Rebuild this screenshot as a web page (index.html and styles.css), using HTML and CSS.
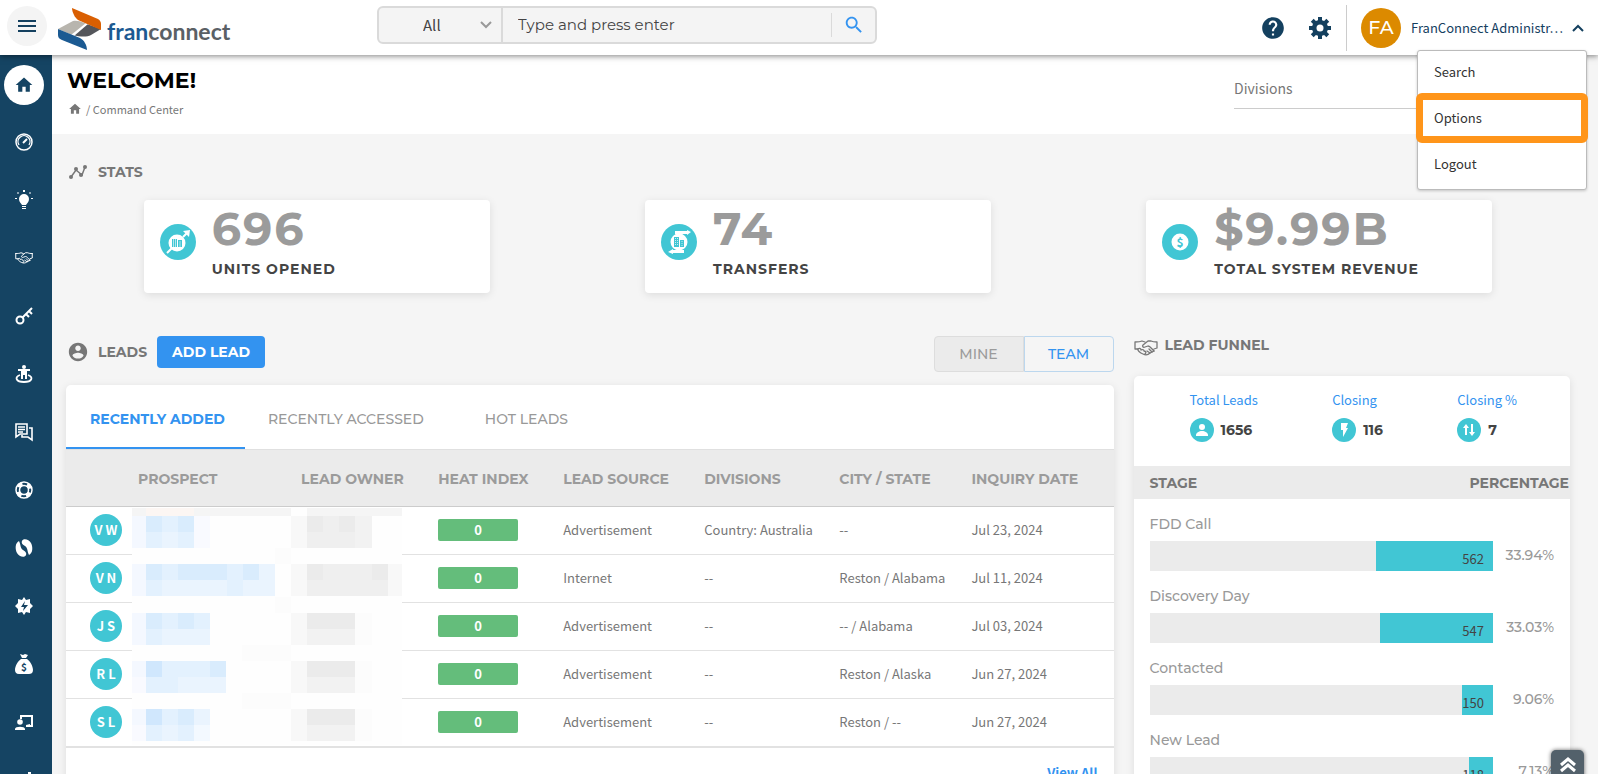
FILE: index.html
```
<!DOCTYPE html>
<html lang="en">
<head>
    <meta charset="UTF-8">
    <meta name="viewport" content="width=device-width, initial-scale=1.0">
    <title>FranConnect - Command Center</title>
    <link rel="stylesheet" href="styles.css">
</head>
<body>
    <svg class="sprite" aria-hidden="true">
        <symbol id="home" viewBox="0 0 24 24"><path d="M10 20v-6h4v6h5v-8h3L12 3 2 12h3v8z"/></symbol>
        <symbol id="shake" viewBox="0 0 24 16">
            <g fill="none" stroke="currentColor" stroke-width="1.300" stroke-linejoin="round" stroke-linecap="round">
                <path d="M1 2c3 0 5 0 7-1l3 1M1 2v7h3"/>
                <path d="M23 2c-3 0-4 0-6-1h-3L9 5c-1 1 0 3 2 2l3-1c2 0 3 2 6 5M23 2v6l-3 1"/>
                <path d="M4 9c1-1 3-1 3 1 2-1 3 0 3 1 1 0 3 1 1 3M4 9c-1 1 2 4 5 5 2 1 5 1 7-1l4-2"/>
                <path d="M15 9l3 3M13 11l3 2"/>
            </g>
        </symbol>
    </svg>

    <header class="topbar">
        <div class="brand">
            <button class="menu-btn" type="button" aria-label="Menu">
                <svg width="18" height="12" viewBox="0 0 18 12"><path d="M0 0h18v2H0zM0 5h18v2H0zM0 10h18v2H0z"/></svg>
            </button>
            <a class="logo" href="#">
                <svg width="44" height="42" viewBox="0 0 44 42">
                    <path fill="#b8b5ae" d="M0 21L15 13c3-1 8 0 14 3L14 27z"/>
                    <path fill="#54565b" d="M43 21L33 27c-4 2-10 2-18 0l14-11z"/>
                    <path fill="#fff" d="M13 27L28 15l2 1-14 12z"/>
                    <path fill="#d95f02" d="M14 0l26 11c2 1 3 3 3 5v6L20 12c-3-2-6-8-6-12z"/>
                    <path fill="#1b5a92" d="M0 21l22 9c4 2 7 7 7 12L4 32c-3-1-4-3-4-5z"/>
                </svg>
                <span class="logo-text"><span class="logo-blue">fran</span>connect</span>
            </a>
        </div>

        <form class="search">
            <div class="search-scope">
                <select aria-label="Search scope">
                    <option>All</option>
                </select>
                <svg width="12" height="8" viewBox="0 0 12 8"><path d="M1 1l5 5 5-5" fill="none" stroke="#999" stroke-width="2"/></svg>
            </div>
            <input type="text" placeholder="Type and press enter" aria-label="Search">
            <button type="submit" aria-label="Search">
                <svg width="22" height="22" viewBox="0 0 24 24"><path d="M15.500 14h-.79l-.28-.27C15.410 12.590 16 11.110 16 9.500 16 5.910 13.090 3 9.500 3S3 5.910 3 9.500 5.910 16 9.500 16c1.610 0 3.090-.59 4.230-1.570l.27.28v.79l5 4.990L20.490 19l-4.990-5zm-6 0C7.010 14 5 11.990 5 9.500S7.010 5 9.500 5 14 7.010 14 9.500 11.990 14 9.500 14z"/></svg>
            </button>
        </form>

        <div class="actions">
            <button class="icon-btn" type="button" aria-label="Help">
                <svg width="26" height="26" viewBox="0 0 24 24"><path d="M12 2C6.480 2 2 6.480 2 12s4.480 10 10 10 10-4.480 10-10S17.520 2 12 2zm1 17h-2v-2h2v2zm2.070-7.750l-.9.92C13.450 12.900 13 13.500 13 15h-2v-.5c0-1.100.45-2.100 1.170-2.830l1.240-1.260c.37-.36.59-.86.59-1.410 0-1.100-.9-2-2-2s-2 .9-2 2H8c0-2.210 1.790-4 4-4s4 1.790 4 4c0 .88-.36 1.680-.93 2.250z"/></svg>
            </button>
            <button class="icon-btn" type="button" aria-label="Settings">
                <svg width="22" height="22" viewBox="0 0 22 22">
                    <g id="teeth"><path d="M9 0h4v22H9zM0 9h22v4H0z"/></g>
                    <use href="#teeth" transform="rotate(45 11 11)"/>
                    <circle cx="11" cy="11" r="8"/>
                    <circle cx="11" cy="11" r="3.500" fill="#fff"/>
                </svg>
            </button>
            <div class="user">
                <span class="user-avatar">FA</span>
                <button class="user-name" type="button"><span>FranConnect Administr…</span>
                    <svg width="12" height="8" viewBox="0 0 12 8"><path d="M1 7l5-5 5 5" fill="none" stroke="#14405f" stroke-width="2"/></svg>
                </button>
                <nav class="user-menu">
                    <a href="#">Search</a>
                    <a href="#" class="highlight">Options</a>
                    <a href="#">Logout</a>
                </nav>
            </div>
        </div>
    </header>

    <div class="layout">
        <nav class="sidebar">
            <a href="#" class="active" aria-label="Home"><svg viewBox="0 0 24 24"><use href="#home"/></svg></a>
            <a href="#" aria-label="Dashboard"><svg viewBox="0 0 18 18"><g fill="none" stroke="#fff"><circle cx="9" cy="9" r="8" stroke-width="1.500"/><path d="M4 12a6 6 0 1 1 10 0" stroke-width="1.300"/><path d="M8 10l4-4" stroke-width="2"/></g></svg></a>
            <a href="#" aria-label="Ideas"><svg viewBox="0 0 18 20"><path d="M9 4a5 5 0 0 0-5 5c0 3 2 4 3 6h4c1-2 3-3 3-6a5 5 0 0 0-5-5zM7 16h4v1H7zM7 18h4v1H7zM8 0h2v2H8zM2 3l1-1 1 1-1 1zM14 3l1-1 1 1-1 1zM0 8h2v1H0zM16 8h2v1h-2z"/></svg></a>
            <a href="#" aria-label="Sales"><svg viewBox="0 0 24 16" stroke-width="2"><use href="#shake"/></svg></a>
            <a href="#" aria-label="Keys"><svg viewBox="0 0 18 18"><g fill="none" stroke="#fff" stroke-width="2"><circle cx="5" cy="13" r="3.500"/><path d="M7.500 10.500L17 1M11 7l3 3M14 4l3 3"/></g></svg></a>
            <a href="#" aria-label="Operations"><svg viewBox="0 0 18 18"><circle cx="9" cy="2" r="2"/><path d="M3 4h12v2h-3v8h-2v-4H8v4H6V6H3z"/><path d="M5 10c-6 2-4 7 4 7s10-5 4-7" fill="none" stroke="#fff" stroke-width="1.800"/></svg></a>
            <a href="#" aria-label="Messages"><svg viewBox="0 0 18 18"><g fill="none" stroke="#fff" stroke-width="1.600"><path d="M1 1h11v10H5l-4 3zM3 4h7M3 6.500h7M3 9h5"/><path d="M14 5h3v12l-4-3H7v-2"/></g></svg></a>
            <a href="#" aria-label="Support"><svg viewBox="0 0 18 18"><g fill="none" stroke="#fff"><circle cx="9" cy="9" r="8" stroke-width="1.500"/><circle cx="9" cy="9" r="4.500" stroke-width="1.500"/><circle cx="9" cy="9" r="6.300" stroke-width="4" stroke-dasharray="5 4.900" stroke-dashoffset="-2.500"/></g></svg></a>
            <a href="#" aria-label="Marketing"><svg viewBox="0 0 18 18"><path d="M4 2C0 4 0 10 2 14c2 4 8 5 9 2 1-2-1-4-3-5C5 9 6 6 4 2zM14 16c4-2 4-8 2-12-2-4-8-5-9-2-1 2 1 4 3 5 3 2 2 5 4 9z"/></svg></a>
            <a href="#" aria-label="Automation"><svg viewBox="0 0 18 18"><path d="M9 0l2 3 4-1v4l3 3-3 3v4l-4-1-2 3-2-3-4 1v-4L0 9l3-3V2l4 1z"/><path d="M10 4l-4 6h3l-1 4 5-6H9z" fill="#14405f"/></svg></a>
            <a href="#" aria-label="Finance"><svg viewBox="0 0 18 20"><path d="M5 0l3 1 2-1 3 1-2 3H7zM6 5h6c3 2 6 7 6 11 0 3-2 4-4 4H4c-3 0-4-2-4-4C0 12 3 7 6 5z"/><text x="9" y="17" text-anchor="middle" class="bag-sign">$</text></svg></a>
            <a href="#" aria-label="Training"><svg viewBox="0 0 18 18"><path d="M6 6V3h11v10h-6" fill="none" stroke="#fff" stroke-width="2"/><circle cx="5" cy="9" r="2.800"/><path d="M0 16c0-3 10-3 10 0v1H0zM11 12l4-1v3h-4z"/></svg></a>
            <a href="#" aria-label="Reports"><svg viewBox="0 0 18 18"><path d="M13 1h3v16h-3zM7 6h3v11H7zM1 10h3v7H1z"/></svg></a>
        </nav>

        <main>
            <div class="page-head">
                <div>
                    <h1>WELCOME!</h1>
                    <div class="crumbs"><a href="#" aria-label="Home"><svg width="14" height="14" viewBox="0 0 24 24"><use href="#home"/></svg></a><span>/ Command Center</span></div>
                </div>
                <button class="divisions" type="button">Divisions</button>
            </div>

            <section class="stats">
                <h2>
                    <svg width="18" height="14" viewBox="0 0 18 14"><path d="M2 12l5-7 6 5 3-8" fill="none" stroke="#777" stroke-width="1.500"/><circle cx="2" cy="12" r="2"/><circle cx="7" cy="4" r="2"/><circle cx="12" cy="10" r="2"/><circle cx="16" cy="2" r="2"/></svg>
                    STATS
                </h2>
                <div class="stat-grid">
                    <div class="stat-card">
                        <svg width="36" height="36" viewBox="0 0 36 36"><circle cx="18" cy="18" r="18" fill="#41c6d4"/><circle cx="17" cy="19" r="8.500" fill="#fff"/><path d="M7 29l5-5M23 13l5-5" stroke="#fff" stroke-width="2"/><path d="M23 7l7-1-1 7z" fill="#fff"/><path d="M12 15h5v8h-5zM18 16h4v7h-4z" fill="#41c6d4"/><path d="M13.500 15v8M15.500 15v8M20 17v6" stroke="#fff" stroke-width=".6"/></svg>
                        <div>
                            <div class="stat-value">696</div>
                            <div class="stat-label">UNITS OPENED</div>
                        </div>
                    </div>
                    <div class="stat-card">
                        <svg width="36" height="36" viewBox="0 0 36 36"><circle cx="18" cy="18" r="18" fill="#41c6d4"/><circle cx="18" cy="18" r="8.500" fill="#fff"/><path d="M14 7h12V6l4 2-4 3v-1H14zM23 29H12v1l-5-2 5-3v1h11z" fill="#fff"/><path d="M13 13h5v10h-5zM19 16h4v7h-4z" fill="#41c6d4"/><path d="M14.500 14v8M16.500 14v8M21 17v5" stroke="#fff" stroke-width=".7" stroke-dasharray="1 1"/></svg>
                        <div>
                            <div class="stat-value">74</div>
                            <div class="stat-label">TRANSFERS</div>
                        </div>
                    </div>
                    <div class="stat-card">
                        <svg width="36" height="36" viewBox="0 0 36 36"><circle cx="18" cy="18" r="18" fill="#41c6d4"/><circle cx="18" cy="18" r="8.500" fill="#fff"/><text x="18" y="23" text-anchor="middle" class="coin-sign">$</text></svg>
                        <div>
                            <div class="stat-value">$9.99B</div>
                            <div class="stat-label">TOTAL SYSTEM REVENUE</div>
                        </div>
                    </div>
                </div>
            </section>

            <div class="columns">
                <section class="leads">
                    <div class="leads-head">
                        <h2>
                            <svg width="22" height="22" viewBox="0 0 24 24"><path d="M12 2C6.480 2 2 6.480 2 12s4.480 10 10 10 10-4.480 10-10S17.520 2 12 2zm0 3c1.660 0 3 1.340 3 3s-1.340 3-3 3-3-1.340-3-3 1.340-3 3-3zm0 14.200c-2.500 0-4.710-1.280-6-3.220.03-1.990 4-3.080 6-3.080 1.990 0 5.970 1.090 6 3.080-1.290 1.940-3.500 3.220-6 3.220z"/></svg>
                            LEADS
                        </h2>
                        <button class="add-lead" type="button">ADD LEAD</button>
                        <div class="toggle">
                            <button type="button">MINE</button>
                            <button type="button" class="on">TEAM</button>
                        </div>
                    </div>

                    <div class="card">
                        <div class="tabs">
                            <button type="button" class="on">RECENTLY ADDED</button>
                            <button type="button">RECENTLY ACCESSED</button>
                            <button type="button">HOT LEADS</button>
                        </div>
                        <div class="table-wrap">
                            <table>
                                <colgroup>
                                    <col class="c-avatar"><col class="c-prospect"><col class="c-owner"><col class="c-heat">
                                    <col class="c-source"><col class="c-division"><col class="c-city"><col class="c-date">
                                </colgroup>
                                <thead>
                                    <tr><th></th><th>PROSPECT</th><th>LEAD OWNER</th><th>HEAT INDEX</th><th>LEAD SOURCE</th><th>DIVISIONS</th><th>CITY / STATE</th><th>INQUIRY DATE</th></tr>
                                </thead>
                                <tbody>
                                    <tr><td><span class="initials">V W</span></td><td></td><td></td><td><span class="heat">0</span></td><td>Advertisement</td><td>Country: Australia</td><td>--</td><td>Jul 23, 2024</td></tr>
                                    <tr><td><span class="initials">V N</span></td><td></td><td></td><td><span class="heat">0</span></td><td>Internet</td><td>--</td><td>Reston / Alabama</td><td>Jul 11, 2024</td></tr>
                                    <tr><td><span class="initials">J S</span></td><td></td><td></td><td><span class="heat">0</span></td><td>Advertisement</td><td>--</td><td>-- / Alabama</td><td>Jul 03, 2024</td></tr>
                                    <tr><td><span class="initials">R L</span></td><td></td><td></td><td><span class="heat">0</span></td><td>Advertisement</td><td>--</td><td>Reston / Alaska</td><td>Jun 27, 2024</td></tr>
                                    <tr><td><span class="initials">S L</span></td><td></td><td></td><td><span class="heat">0</span></td><td>Advertisement</td><td>--</td><td>Reston / --</td><td>Jun 27, 2024</td></tr>
                                </tbody>
                            </table>
                            <!-- masked names and owners -->
                            <svg class="mask" width="270" height="237" viewBox="0 0 270 237" shape-rendering="crispEdges">
                                <path fill="#fefefe" d="M0 0h270v237H0z"/>
                                <path fill="#f5f5f5" d="M0 0h14v8H0zM62 0h97v8H62zM175 0h95v8h-95z"/>
                                <path fill="#fcf6f3" d="M14 0h48v8H14z"/>
                                <path fill="#f4f8ff" d="M0 8h14v32H0zM0 56h14v32H0zM0 105h14v32H0zM0 153h14v16H0zM0 201h14v16H0z"/>
                                <path fill="#f9faff" d="M0 169h14v16H0zM0 217h14v16H0zM62 8h16v32H62z"/>
                                <path fill="#d9ecfd" d="M14 8h16v16H14zM46 8h16v16H46zM14 56h16v16H14zM46 56h49v16H46zM111 56h16v16h-16zM14 105h16v16H14zM46 105h16v16H46zM46 201h16v16H46zM78 153h16v16H78z"/>
                                <path fill="#e3f1fe" d="M30 8h16v16H30zM14 24h16v16H14zM46 24h16v16H46zM30 56h16v16H30zM95 56h16v16H95zM14 72h16v16H14zM95 72h16v16H95zM30 105h16v16H30zM62 105h16v16H62zM14 121h16v16H14zM30 153h48v16H30zM14 169h32v16H14zM30 201h16v16H30zM14 217h16v16H14zM46 217h16v16H46z"/>
                                <path fill="#eaf4fe" d="M30 24h16v16H30zM30 72h65v16H30zM111 72h16v16h-16zM127 56h16v32h-16zM30 121h48v16H30zM46 169h48v16H46zM62 201h16v16H62zM30 217h16v16H30z"/>
                                <path fill="#d0e7fd" d="M14 153h16v16H14zM14 201h16v16H14z"/>
                                <path fill="#f3f9ff" d="M62 217h16v16H62z"/>
                                <path fill="#f8f8f8" d="M159 8h16v32h-16zM159 56h16v32h-16zM256 56h14v32h-14zM159 105h16v32h-16zM159 153h16v32h-16zM159 201h16v32h-16z"/>
                                <path fill="#ebebeb" d="M175 8h16v16h-16zM207 8h16v16h-16zM175 56h16v16h-16zM240 56h16v16h-16zM175 105h48v16h-48zM175 153h48v16h-48zM175 201h48v16h-48z"/>
                                <path fill="#efefef" d="M191 8h16v16h-16zM175 24h48v16h-48zM191 56h49v16h-49zM175 72h81v16h-81z"/>
                                <path fill="#f2f2f2" d="M223 8h17v32h-17zM175 121h48v16h-48zM175 169h48v16h-48zM175 217h48v16h-48z"/>
                                <path fill="#fcfcfc" d="M223 105h17v32h-17zM223 153h17v32h-17zM223 201h17v32h-17zM143 40h16v16h-16zM143 89h16v16h-16zM110 137h49v16h-49zM110 185h49v16h-49z"/>
                            </svg>
                        </div>
                        <div class="view-all"><a href="#">View All</a></div>
                    </div>
                </section>

                <section class="funnel">
                    <h2><svg width="24" height="16" viewBox="0 0 24 16"><use href="#shake"/></svg>LEAD FUNNEL</h2>
                    <div class="card">
                        <div class="totals">
                            <div class="total">
                                <a href="#">Total Leads</a>
                                <div><svg width="24" height="24" viewBox="0 0 24 24"><circle cx="12" cy="12" r="12" fill="#41c6d4"/><circle cx="12" cy="9" r="3"/><path d="M6 18v-1c0-2 3-4 6-4s6 2 6 4v1z"/></svg>1656</div>
                            </div>
                            <div class="total">
                                <a href="#">Closing</a>
                                <div><svg width="24" height="24" viewBox="0 0 24 24"><circle cx="12" cy="12" r="12" fill="#41c6d4"/><path d="M9 5h7l-2 5h2l-5 9v-7H9z"/></svg>116</div>
                            </div>
                            <div class="total">
                                <a href="#">Closing %</a>
                                <div><svg width="24" height="24" viewBox="0 0 24 24"><circle cx="12" cy="12" r="12" fill="#41c6d4"/><path d="M8 17v-7H6l3-4 3 4h-2v7zM14 6v8h-2l3 4 3-4h-2V6z"/></svg>7</div>
                            </div>
                        </div>
                        <div class="funnel-head"><span>STAGE</span><span>PERCENTAGE</span></div>
                        <ul class="stages">
                            <li><div class="stage-name">FDD Call</div><div class="stage-row"><div class="bar"><div class="fill" style="width:33.94%">562</div></div><span>33.94%</span></div></li>
                            <li><div class="stage-name">Discovery Day</div><div class="stage-row"><div class="bar"><div class="fill" style="width:33.03%">547</div></div><span>33.03%</span></div></li>
                            <li><div class="stage-name">Contacted</div><div class="stage-row"><div class="bar"><div class="fill" style="width:9.06%">150</div></div><span>9.06%</span></div></li>
                            <li><div class="stage-name">New Lead</div><div class="stage-row"><div class="bar"><div class="fill" style="width:7.13%">118</div></div><span>7.13%</span></div></li>
                        </ul>
                    </div>
                </section>
            </div>
        </main>
    </div>

    <button class="to-top" type="button" aria-label="Back to top">
        <svg width="16" height="16" viewBox="0 0 16 16"><path d="M1 8l7-6 7 6M1 14l7-6 7 6" fill="none" stroke="#fff" stroke-width="3"/></svg>
    </button>
</body>
</html>
```

FILE: styles.css
```
* {
    box-sizing: border-box;
}

body {
    margin: 0;
    height: 100vh;
    display: flex;
    flex-direction: column;
    overflow: hidden;
    background-color: #f5f5f5;
    color: #777;
    font-family: "Source Sans Pro", "Noto Sans CJK JP", sans-serif;
    font-size: 13px;
    line-height: 20px;
}

button, input, select {
    font-family: inherit;
    font-size: inherit;
    line-height: inherit;
    border: none;
    background: none;
    padding: 0;
    margin: 0;
    color: inherit;
}

button {
    cursor: pointer;
}

a {
    color: inherit;
    text-decoration: none;
}

svg {
    display: block;
    flex: none;
    fill: currentColor;
}

h1, h2, th, .stat-value, .stat-label, .add-lead, .toggle, .tabs,
.funnel-head, .stages, .total div, .user-avatar, .search input {
    font-family: Montserrat, Inter, sans-serif;
}

h2 {
    margin: 0;
    display: flex;
    align-items: center;
    font-size: 14px;
    font-weight: 700;
    color: #777;
}

.sprite {
    position: absolute;
    width: 0;
    height: 0;
}

/* top bar */
.topbar {
    position: relative;
    z-index: 2;
    flex: none;
    height: 55px;
    display: flex;
    background-color: #fff;
    box-shadow: 0 1px 6px rgba(0, 0, 0, 0.5);
}

.brand {
    width: 377px;
    flex: none;
    display: flex;
    padding: 6px 0 0 7px;
}

.menu-btn {
    width: 40px;
    height: 40px;
    border-radius: 50%;
    background-color: #f4f4f4;
    color: #14405f;
    display: flex;
    align-items: center;
    justify-content: center;
}

.logo {
    display: flex;
    align-items: center;
    gap: 5px;
    height: 46px;
    margin-left: 11px;
}

.logo-text {
    font-family: Lato, sans-serif;
    font-size: 23px;
    font-weight: 700;
    color: #5a6065;
    padding-top: 4px;
}

.logo-blue {
    color: #1b5a92;
}

.search {
    width: 500px;
    height: 38px;
    margin-top: 6px;
    display: flex;
    align-items: center;
    border: 2px solid #dadada;
    border-radius: 6px;
    background-color: #f4f4f4;
    color: #444;
}

.search-scope {
    width: 124px;
    height: 100%;
    display: flex;
    align-items: center;
    border-right: 2px solid #dadada;
    padding-right: 9px;
}

.search-scope select {
    flex: 1;
    appearance: none;
    padding-left: 44px;
    font-size: 15px;
}

.search-scope svg {
    fill: none;
}

.search input {
    flex: 1;
    padding-left: 15px;
    font-size: 15px;
    outline: none;
}

.search input::placeholder {
    color: #444;
    opacity: 1;
}

.search button {
    width: 44px;
    height: 24px;
    display: flex;
    align-items: center;
    justify-content: center;
    border-left: 1px solid #dadada;
    color: #3393f0;
}

.actions {
    margin-left: auto;
    display: flex;
    align-items: center;
    color: #14405f;
}

.icon-btn {
    margin-right: 23px;
}

.icon-btn + .icon-btn {
    margin-right: 15px;
}

.user {
    position: relative;
    width: 252px;
    height: 46px;
    display: flex;
    align-items: center;
    gap: 10px;
    border-left: 1px solid #ccc;
    padding-left: 14px;
}

.user-avatar {
    width: 40px;
    height: 40px;
    border-radius: 50%;
    background-color: #dc8a00;
    color: #fff;
    font-size: 19px;
    font-weight: 500;
    line-height: 40px;
    text-align: center;
}

.user-name {
    display: flex;
    align-items: center;
    gap: 9px;
}

.user-menu {
    position: absolute;
    top: 45px;
    right: 11px;
    width: 170px;
    background-color: #fff;
    border: 1px solid #bbb;
    border-radius: 3px;
    box-shadow: 0 1px 3px rgba(0, 0, 0, 0.2);
    color: #333;
}

.user-menu a {
    display: block;
    margin: 0 2px 4px;
    padding: 0 14px;
    line-height: 42px;
}

.user-menu .highlight {
    outline: 7px solid #ff951a;
    outline-offset: -3px;
    border-radius: 2px;
}

/* layout */
.layout {
    flex: 1;
    min-height: 0;
    display: flex;
}

.sidebar {
    width: 52px;
    flex: none;
    overflow: hidden;
    background-color: #154463;
    color: #fff;
    padding: 1px 0 0 4px;
}

.sidebar a {
    width: 40px;
    height: 58px;
    display: flex;
    align-items: center;
    justify-content: center;
}

.sidebar svg {
    width: 18px;
    height: 20px;
}

.sidebar .active {
    height: 40px;
    margin: 9px 0 8px;
    border-radius: 50%;
    background-color: #fff;
    color: #154463;
}

.sidebar .active svg {
    width: 20px;
}

.bag-sign {
    font-size: 10px;
    font-weight: 700;
    fill: #154463;
}

main {
    flex: 1;
    min-width: 0;
    overflow-y: auto;
    scrollbar-width: none;
}

.page-head {
    display: flex;
    justify-content: space-between;
    align-items: flex-start;
    height: 79px;
    margin-right: 15px;
    padding: 14px 0 0 15px;
    background-color: #fff;
}

h1 {
    margin: 0;
    font-size: 22px;
    line-height: 24px;
    font-weight: 700;
    color: #000;
}

.crumbs {
    display: flex;
    align-items: center;
    gap: 4px;
    margin-top: 6px;
    padding-left: 1px;
    font-size: 11px;
}

.divisions {
    width: 334px;
    height: 40px;
    border-bottom: 1px solid #ccc;
    margin-right: 15px;
    padding-bottom: 2px;
    font-size: 14px;
    text-align: left;
}

/* stats */
.stats {
    padding: 28px 28px 0 14px;
}

.stats h2 {
    padding-left: 3px;
    gap: 11px;
}

.stat-grid {
    display: grid;
    grid-template-columns: repeat(3, 1fr);
    justify-items: center;
    margin-top: 18px;
}

.stat-card {
    width: 69%;
    height: 93px;
    display: flex;
    gap: 16px;
    padding: 7px 16px;
    border-radius: 4px;
    background-color: #fff;
    box-shadow: 0 2px 8px rgba(0, 0, 0, 0.1);
}

.stat-card > svg {
    margin-top: 17px;
}

.stat-value {
    font-size: 46px;
    line-height: 44px;
    font-weight: 700;
    letter-spacing: 2px;
    color: #9b9b9b;
}

.stat-label {
    margin-top: 8px;
    font-size: 14px;
    font-weight: 700;
    letter-spacing: 1px;
    color: #444;
}

.coin-sign {
    font-size: 12px;
    font-weight: 700;
    fill: #41c6d4;
}

/* leads and funnel */
.columns {
    display: grid;
    grid-template-columns: 12fr 5fr;
    gap: 20px;
    padding: 43px 28px 40px 14px;
}

.card {
    background-color: #fff;
    border-radius: 5px;
    box-shadow: 0 2px 8px rgba(0, 0, 0, 0.1);
}

.leads-head {
    display: flex;
    align-items: flex-start;
    height: 49px;
}

.leads-head h2 {
    height: 32px;
    gap: 9px;
    padding-left: 1px;
}

.add-lead {
    width: 108px;
    height: 32px;
    margin-left: 10px;
    border-radius: 4px;
    background-color: #3393f0;
    color: #fff;
    font-size: 14px;
    font-weight: 700;
}

.toggle {
    display: flex;
    margin-left: auto;
}

.toggle button {
    width: 90px;
    height: 36px;
    border: 1px solid #ddd;
    border-radius: 4px 0 0 4px;
    background-color: #ebebeb;
    color: #9b9b9b;
    font-size: 14px;
    font-weight: 500;
}

.toggle .on {
    border-color: #bcd7ee;
    border-radius: 0 4px 4px 0;
    background-color: #f5f5f5;
    color: #3393f0;
}

.tabs {
    display: flex;
    height: 65px;
    border-bottom: 1px solid #e0e0e0;
}

.tabs button {
    padding: 3px 38px 0 23px;
    font-size: 14px;
    font-weight: 500;
    color: #999;
}

.tabs .on {
    padding: 5px 20px 0 24px;
    border-bottom: 2px solid #3393f0;
    font-weight: 700;
    color: #3393f0;
}

.table-wrap {
    position: relative;
}

table {
    width: 100%;
    table-layout: fixed;
    border-collapse: collapse;
}

.c-avatar { width: 64px; }
.c-prospect { width: 163px; }
.c-owner { width: 137px; }
.c-heat { width: 125px; }
.c-source { width: 141px; }
.c-division { width: 135px; }
.c-city { width: 132px; }
.c-date { width: 150px; }

th {
    height: 56px;
    padding: 2px 8px 0;
    border-bottom: 1px solid #ccc;
    background-color: #ebebeb;
    color: #9b9b9b;
    font-size: 14px;
    font-weight: 700;
    text-align: left;
    white-space: nowrap;
}

td {
    height: 48px;
    padding: 0 8px;
    border-bottom: 1px solid #e2e2e2;
    white-space: nowrap;
}

td:first-child {
    padding-left: 24px;
}

.initials {
    display: block;
    width: 32px;
    height: 32px;
    border-radius: 50%;
    background-color: #41c6d4;
    color: #fff;
    font-weight: 700;
    line-height: 32px;
    text-align: center;
}

.heat {
    display: block;
    width: 80px;
    height: 22px;
    border-radius: 2px;
    background-color: #64bd7b;
    color: #fff;
    font-weight: 700;
    line-height: 22px;
    text-align: center;
}

.mask {
    position: absolute;
    top: 58px;
    left: 66px;
}

.view-all {
    border-top: 1px solid #e2e2e2;
    padding: 15px 16px 16px;
    text-align: right;
    font-weight: 700;
    color: #3393f0;
}

.funnel h2 {
    height: 18px;
    gap: 7px;
    margin-bottom: 22px;
}

.funnel h2 svg {
    margin-top: 5px;
}

.totals {
    display: flex;
    justify-content: space-between;
    height: 90px;
    padding: 14px 53px 0 56px;
}

.total a {
    color: #3393f0;
}

.total div {
    display: flex;
    align-items: center;
    gap: 7px;
    margin-top: 8px;
    font-size: 14px;
    font-weight: 700;
    color: #444;
}

.total svg {
    color: #fff;
}

.funnel-head {
    display: flex;
    justify-content: space-between;
    padding: 1px 1px 0 16px;
    background-color: #ebebeb;
    font-size: 14px;
    font-weight: 700;
    line-height: 32px;
}

.stages {
    list-style: none;
    margin: 0;
    padding: 15px 16px 15px;
    font-size: 14px;
    font-weight: 500;
    color: #999;
}

.stages li {
    height: 72px;
}

.stage-row {
    display: flex;
    margin-top: 7px;
}

.bar {
    flex: 1;
    display: flex;
    justify-content: flex-end;
    height: 30px;
    background-color: #ebebeb;
}

.fill {
    display: flex;
    justify-content: flex-end;
    padding: 8px 9px 0 0;
    background-color: #41c6d4;
    color: #444;
    font-family: "Source Sans Pro", "Noto Sans CJK JP", sans-serif;
    font-size: 13px;
    font-weight: 400;
}

.stage-row span {
    width: 61px;
    line-height: 28px;
    text-align: right;
}

.to-top {
    position: fixed;
    right: 14px;
    bottom: -8px;
    width: 33px;
    height: 32px;
    display: flex;
    justify-content: center;
    padding-top: 7px;
    border-radius: 5px;
    background-color: #53616b;
    box-shadow: 0 0 4px rgba(0, 0, 0, 0.6);
    z-index: 3;
}
```
